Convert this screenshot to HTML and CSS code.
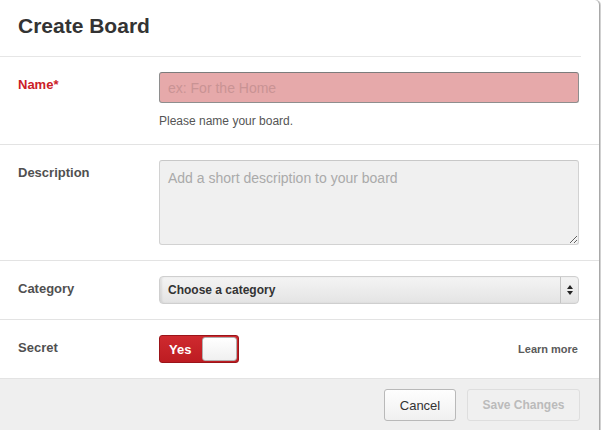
FILE: index.html
```html
<!DOCTYPE html>
<html>
<head>
<meta charset="utf-8">
<link rel="stylesheet" href="styles.css">
</head>
<body>
<div class="dialog">
  <div class="header"><h1 class="title">Create Board</h1></div>
  <div class="row">
    <div class="label label-error">Name*</div>
    <div class="field">
      <input class="text-input error" type="text" placeholder="ex: For the Home">
      <div class="hint">Please name your board.</div>
    </div>
  </div>
  <div class="row">
    <div class="label">Description</div>
    <div class="field">
      <textarea class="textarea" placeholder="Add a short description to your board"></textarea>
    </div>
  </div>
  <div class="row">
    <div class="label">Category</div>
    <div class="field">
      <div class="select">
        <span class="select-text">Choose a category</span>
        <span class="select-arrows"><span class="arr-up"></span><span class="arr-down"></span></span>
      </div>
    </div>
  </div>
  <div class="row">
    <div class="label">Secret</div>
    <div class="field field-inline">
      <div class="toggle"><span class="toggle-text">Yes</span><span class="knob"></span></div>
      <a class="learn">Learn more</a>
    </div>
  </div>
  <div class="footer">
    <button class="btn btn-cancel">Cancel</button>
    <button class="btn btn-save">Save Changes</button>
  </div>
</div>
</body>
</html>
```

FILE: styles.css
```css
html, body {
  margin: 0;
  padding: 0;
  background: #fff;
  font-family: "Liberation Sans", Arial, sans-serif;
}
.dialog {
  width: 599px;
  height: 430px;
  background: #fff;
  border-right: 1px solid #a8a8a8;
  border-top-right-radius: 5px;
  box-shadow: 1px 0 0 rgba(0,0,0,0.18);
  display: flex;
  flex-direction: column;
  overflow: hidden;
}
.header {
  height: 57px;
  box-sizing: border-box;
  margin-right: 18px;
  padding: 14px 0 0 18px;
  border-bottom: 1px solid #e6e6e6;
}
.title {
  margin: 0;
  font-size: 21px;
  line-height: 24px;
  font-weight: bold;
  color: #333;
}
.row {
  display: flex;
  padding: 15px 20px 15px 18px;
  border-bottom: 1px solid #e3e3e3;
}
.label {
  width: 141px;
  flex: none;
  font-size: 13px;
  line-height: 18px;
  font-weight: bold;
  color: #505050;
  padding-top: 4px;
}
.label-error { color: #cb2027; }
.field {
  flex: 1;
  display: flex;
  flex-direction: column;
}
.field-inline {
  flex-direction: row;
  align-items: center;
}
.text-input {
  box-sizing: border-box;
  width: 420px;
  height: 31px;
  margin: 0;
  padding: 0 8px;
  font-family: inherit;
  font-size: 14px;
  border-radius: 3px;
  outline: none;
}
.text-input.error {
  background: #e6a9aa;
  border: 1px solid #8e8e8e;
  border-top-color: #7c7c7c;
  color: #333;
}
.text-input.error::placeholder { color: #c99394; }
.hint {
  margin-top: 10px;
  font-size: 12px;
  line-height: 16px;
  color: #555;
}
.textarea {
  box-sizing: border-box;
  width: 420px;
  height: 85px;
  margin: 0;
  padding: 8px 8px 6px;
  font-family: inherit;
  font-size: 14px;
  line-height: 18px;
  background: #f0f0f0;
  border: 1px solid #d2d2d2;
  border-top-color: #c8c8c8;
  border-radius: 3px;
  outline: none;
  display: block;
}
.textarea::placeholder { color: #aaa; }
.select {
  box-sizing: border-box;
  width: 420px;
  height: 28px;
  display: flex;
  align-items: stretch;
  background: linear-gradient(#f4f4f4, #e4e4e4);
  border: 1px solid #cfcfcf;
  border-radius: 4px;
  box-shadow: inset 2px 0 2px rgba(0,0,0,0.08);
}
.select-text {
  flex: 1;
  padding-left: 8px;
  font-size: 12px;
  font-weight: bold;
  color: #333;
  line-height: 26px;
}
.select-arrows {
  width: 17px;
  border-left: 1px solid #c4c4c4;
  display: flex;
  flex-direction: column;
  align-items: center;
  justify-content: center;
  gap: 2px;
}
.arr-up, .arr-down {
  width: 0;
  height: 0;
  border-left: 3px solid transparent;
  border-right: 3px solid transparent;
}
.arr-up { border-bottom: 4px solid #222; }
.arr-down { border-top: 4px solid #222; }
.toggle {
  box-sizing: border-box;
  width: 80px;
  height: 28px;
  background: linear-gradient(#cf2a2f, #bd1c22);
  border: 1px solid #9b1419;
  border-radius: 3px;
  display: flex;
  align-items: center;
  justify-content: space-between;
  padding: 0 1px 0 9px;
}
.toggle-text {
  color: #fff;
  font-size: 13px;
  font-weight: bold;
}
.knob {
  box-sizing: border-box;
  width: 35px;
  height: 24px;
  background: linear-gradient(#fff, #f0f0f0);
  border: 1px solid #b0b0b0;
  border-radius: 3px;
}
.learn {
  margin-left: auto;
  margin-right: 1px;
  font-size: 11px;
  font-weight: bold;
  color: #5a5a5a;
}
.footer {
  flex: 1;
  background: #efefef;
  display: flex;
  justify-content: flex-end;
  align-items: flex-start;
  gap: 11px;
  padding: 10px 19px 0 0;
}
.btn {
  box-sizing: border-box;
  height: 32px;
  margin: 0;
  border-radius: 3px;
  font-family: inherit;
  cursor: default;
}
.btn-cancel {
  width: 72px;
  background: linear-gradient(#fefefe, #f0f0f0);
  border: 1px solid #b9b9b9;
  font-size: 13px;
  color: #333;
}
.btn-save {
  width: 113px;
  background: #f0f0f0;
  border: 1px solid #dedede;
  font-size: 12px;
  font-weight: bold;
  color: #bbb;
}
```
